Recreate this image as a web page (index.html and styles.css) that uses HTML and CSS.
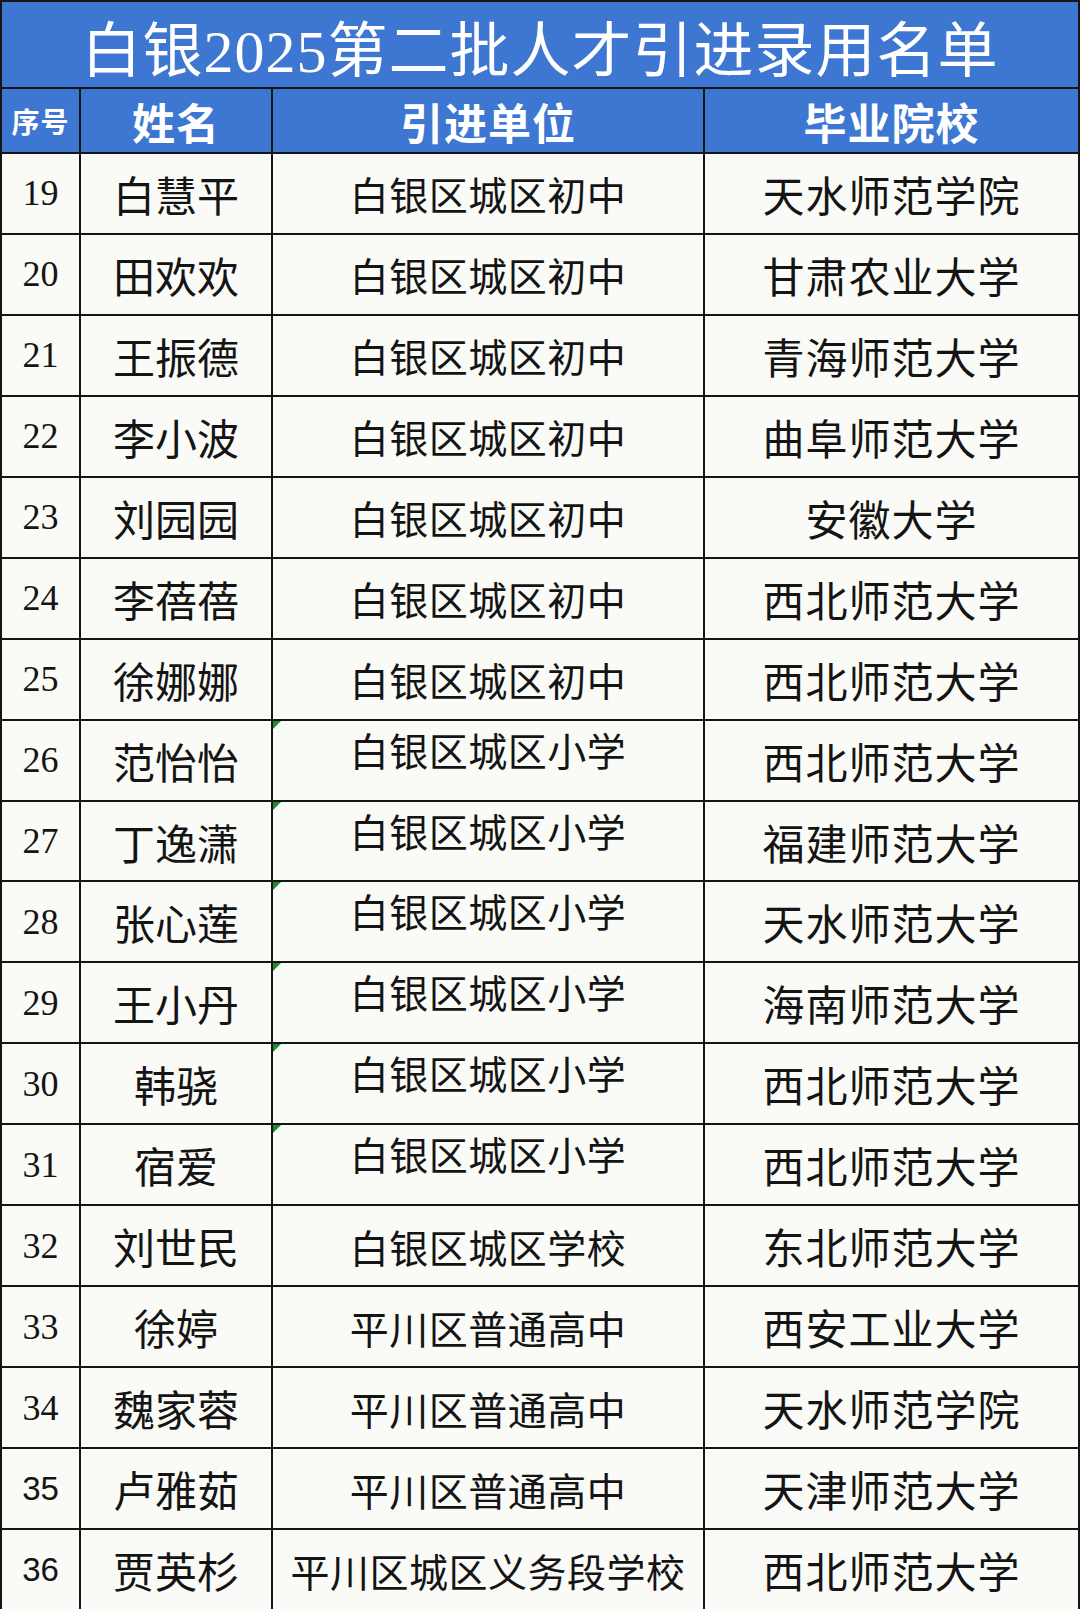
FILE: index.html
```html
<!DOCTYPE html>
<html lang="zh">
<head>
<meta charset="utf-8">
<title>白银2025第二批人才引进录用名单</title>
<link rel="stylesheet" href="styles.css">
</head>
<body>
<div class="sheet">
  <div class="title">白银2025第二批人才引进录用名单</div>
  <div class="hd hd-no">序号</div>
  <div class="hd">姓名</div>
  <div class="hd">引进单位</div>
  <div class="hd">毕业院校</div>

  <div class="c no">19</div><div class="c name">白慧平</div><div class="c unit">白银区城区初中</div><div class="c school">天水师范学院</div>
  <div class="c no">20</div><div class="c name">田欢欢</div><div class="c unit">白银区城区初中</div><div class="c school">甘肃农业大学</div>
  <div class="c no">21</div><div class="c name">王振德</div><div class="c unit">白银区城区初中</div><div class="c school">青海师范大学</div>
  <div class="c no">22</div><div class="c name">李小波</div><div class="c unit">白银区城区初中</div><div class="c school">曲阜师范大学</div>
  <div class="c no">23</div><div class="c name">刘园园</div><div class="c unit">白银区城区初中</div><div class="c school">安徽大学</div>
  <div class="c no">24</div><div class="c name">李蓓蓓</div><div class="c unit">白银区城区初中</div><div class="c school">西北师范大学</div>
  <div class="c no">25</div><div class="c name">徐娜娜</div><div class="c unit">白银区城区初中</div><div class="c school">西北师范大学</div>
  <div class="c no">26</div><div class="c name">范怡怡</div><div class="c unit flag">白银区城区小学</div><div class="c school">西北师范大学</div>
  <div class="c no">27</div><div class="c name">丁逸潇</div><div class="c unit flag">白银区城区小学</div><div class="c school">福建师范大学</div>
  <div class="c no">28</div><div class="c name">张心莲</div><div class="c unit flag">白银区城区小学</div><div class="c school">天水师范大学</div>
  <div class="c no">29</div><div class="c name">王小丹</div><div class="c unit flag">白银区城区小学</div><div class="c school">海南师范大学</div>
  <div class="c no">30</div><div class="c name">韩骁</div><div class="c unit flag">白银区城区小学</div><div class="c school">西北师范大学</div>
  <div class="c no">31</div><div class="c name">宿爱</div><div class="c unit flag">白银区城区小学</div><div class="c school">西北师范大学</div>
  <div class="c no">32</div><div class="c name">刘世民</div><div class="c unit">白银区城区学校</div><div class="c school">东北师范大学</div>
  <div class="c no">33</div><div class="c name">徐婷</div><div class="c unit">平川区普通高中</div><div class="c school">西安工业大学</div>
  <div class="c no">34</div><div class="c name">魏家蓉</div><div class="c unit">平川区普通高中</div><div class="c school">天水师范学院</div>
  <div class="c no sans">35</div><div class="c name">卢雅茹</div><div class="c unit">平川区普通高中</div><div class="c school">天津师范大学</div>
  <div class="c no sans">36</div><div class="c name">贾英杉</div><div class="c unit">平川区城区义务段学校</div><div class="c school">西北师范大学</div>
</div>
</body>
</html>
```
FILE: styles.css
```css
html, body {
  margin: 0;
  padding: 0;
  background: #fafaf7;
}

.sheet {
  box-sizing: border-box;
  width: 1080px;
  height: 1609px;
  padding: 2px 2px 0 2px;
  background: #151515;
  display: grid;
  grid-template-columns: 77px 190px 430px 1fr;
  grid-template-rows: 85px 63px repeat(18, 1fr);
  gap: 2px;
  overflow: hidden;
}

.title {
  grid-column: 1 / -1;
  background: #3d77d2;
  color: #ffffff;
  font-family: "Liberation Serif", "Noto Sans CJK SC", serif;
  font-size: 60px;
  font-weight: 400;
  display: flex;
  align-items: center;
  justify-content: center;
  padding-top: 2px;
  letter-spacing: 1px;
}

.hd {
  background: #3d77d2;
  color: #ffffff;
  font-family: "Noto Sans CJK SC", sans-serif;
  font-weight: 700;
  font-size: 43px;
  display: flex;
  align-items: center;
  justify-content: center;
  letter-spacing: 1px;
}

.hd-no {
  font-size: 28px;
  letter-spacing: 1px;
}

.c {
  background: #fafaf7;
  color: #141414;
  display: flex;
  align-items: center;
  justify-content: center;
  font-family: "Liberation Serif", "Noto Sans CJK SC", serif;
  font-weight: 400;
  white-space: nowrap;
}

.no {
  font-size: 36px;
}

.no.sans {
  font-family: "Liberation Sans", sans-serif;
  font-size: 33px;
}

.name {
  font-size: 42px;
}

.unit {
  font-size: 39px;
  letter-spacing: 0.5px;
}

.school {
  font-size: 42px;
  letter-spacing: 1px;
}

.flag {
  position: relative;
  align-items: flex-start;
  padding-top: 0;
}

.flag::before {
  content: "";
  position: absolute;
  left: 0;
  top: 0;
  width: 0;
  height: 0;
  border-top: 8px solid #1f8c2c;
  border-right: 8px solid transparent;
}
```
